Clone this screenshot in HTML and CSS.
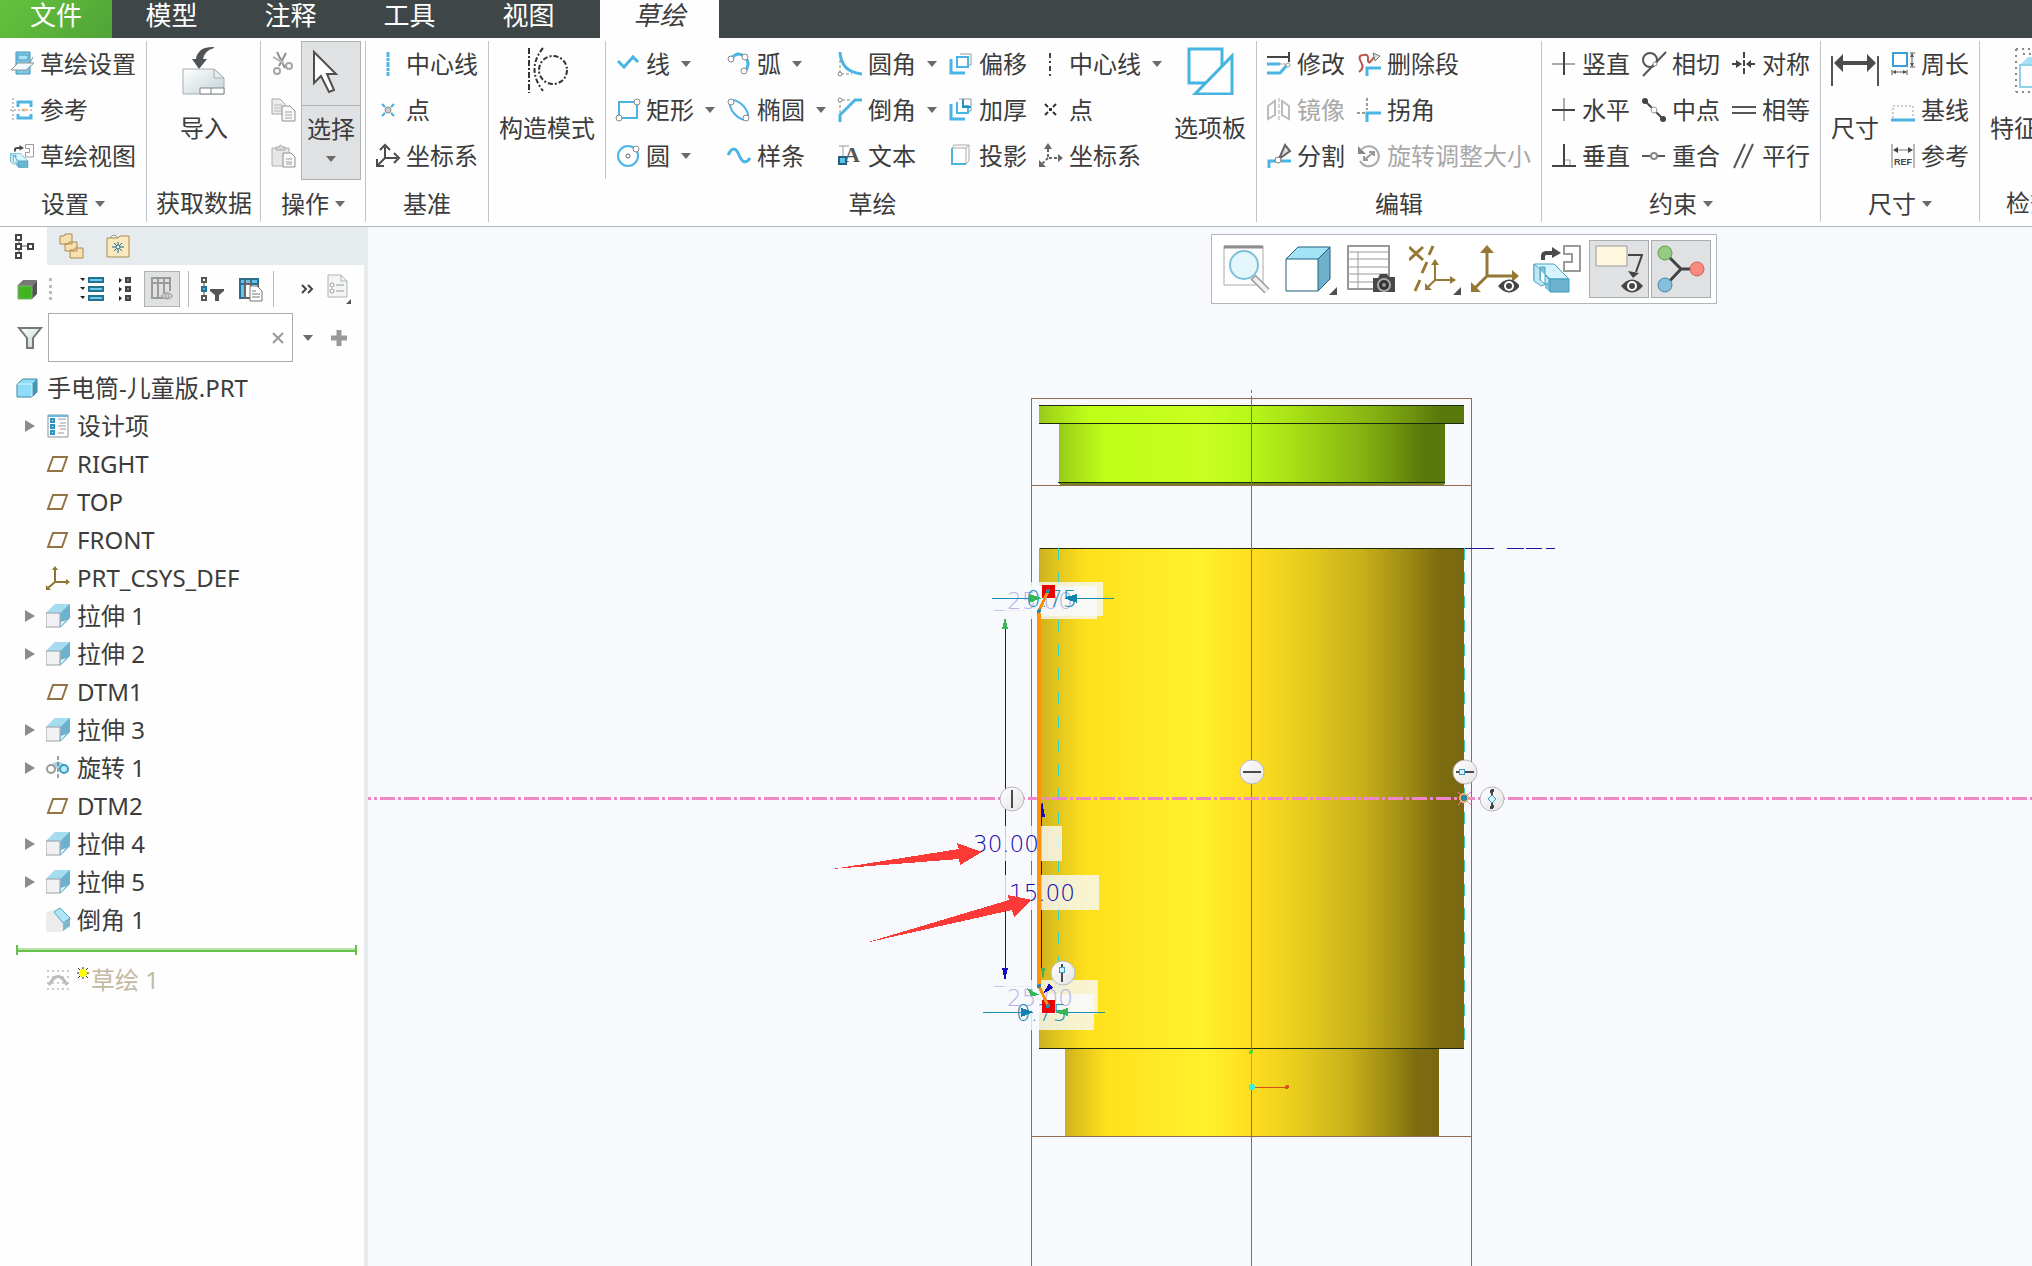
FILE: index.html
```html
<!DOCTYPE html>
<html lang="zh-CN">
<head>
    <meta charset="UTF-8">
    <meta name="viewport" content="width=device-width, initial-scale=1.0">
    <title>手电筒-儿童版.PRT</title>
    <link rel="stylesheet" href="styles.css">
</head>
<body>
    <!-- Shared icons -->
    <svg class="defs" width="0" height="0" aria-hidden="true">
        <defs>
            <linearGradient id="steel" x1="0" y1="0" x2="1" y2="1">
                <stop offset="0" stop-color="#fff"/>
                <stop offset="1" stop-color="#c3d3d8"/>
            </linearGradient>
            <linearGradient id="sky" x1="0" y1="0" x2="1" y2="0">
                <stop offset="0" stop-color="#d5f0fa"/>
                <stop offset="1" stop-color="#5fa9c8"/>
            </linearGradient>
        </defs>
        <symbol id="plane" viewBox="0 0 24 24">
            <path d="M7 5H21L16 19H2Z" fill="#fff" stroke="#927544" stroke-width="2"/>
        </symbol>
        <symbol id="extrude" viewBox="0 0 24 24">
            <path d="M0 9L9 0H24V13L14 24V9Z" fill="url(#sky)"/>
            <path d="M0 9L9 0H24L14 9Z" fill="#a5dcef"/>
            <path d="M15 9L24 0V14L15 23Z" fill="#6cb2cf"/>
            <path d="M15 18L20 16L15 22Z" fill="#e8f7fc"/>
            <path d="M0 9H14V23H0Z" fill="#f1f1f3" stroke="#98a0a4"/>
        </symbol>
        <symbol id="orient" viewBox="0 0 48 48">
            <path d="M10 15V11Q10 8 14 8H20" fill="none" stroke="#4a4a4a" stroke-width="4"/>
            <path d="M19 2L28 8L19 13Z" fill="#4a4a4a"/>
            <path d="M31 1H47V26H31V17H39V9H31Z" fill="#fff" stroke="#9a9a9a" stroke-width="2"/>
            <path d="M1 19H22L36 34V47H17L12 43V30L8 26V39L1 34Z" fill="#7fc0da"/>
            <path d="M1 19H21L36 34H17L12 29V22H7V32L1 34Z" fill="#d6f4fd" stroke="#4aa3c4"/>
            <path d="M17 34H36V47H17Z" fill="#6db3cf" stroke="#3c9cc0"/>
            <path d="M1 19V36L8 41L16 38V34L12 30V39L7 35V24Z" fill="#bfe7f4" stroke="#4aa3c4"/>
        </symbol>
        <symbol id="eye" viewBox="0 0 22 14">
            <path d="M0 7Q11 -6 22 7Q11 20 0 7Z" fill="#454545"/>
            <circle cx="11" cy="7" r="5" fill="#fff"/>
            <circle cx="11" cy="7" r="3" fill="#454545"/>
        </symbol>
    </svg>

    <nav class="tabs">
        <a href="#" class="tab tab-file">文件</a>
        <a href="#" class="tab">模型</a>
        <a href="#" class="tab">注释</a>
        <a href="#" class="tab">工具</a>
        <a href="#" class="tab">视图</a>
        <a href="#" class="tab tab-active">草绘</a>
    </nav>

    <div class="ribbon">
        <div class="group">
            <div class="group-body">
                <div class="column">
                    <button class="item">
                        <svg class="icon" viewBox="0 0 24 24"><path d="M6 0H20V22H6Z" fill="#7cc8e4" stroke="#3b93b5"/><path d="M8 3H18V8H8Z" fill="#a9e0f3" stroke="#4a9dbc"/><path d="M8 11H24L16 18H1Z" fill="#f4fafc" stroke="#8c9599"/><path d="M20 11L23 5" stroke="#8c9599"/></svg>
                        草绘设置
                    </button>
                    <button class="item">
                        <svg class="icon" viewBox="0 0 24 24"><path d="M8 9V4H21V9M8 16V20H21V16" fill="none" stroke="#4db5e6" stroke-width="3"/><path d="M3 0V24M0 12H24" stroke="#8a8a8a" stroke-width="1" stroke-dasharray="2 2"/><path d="M11 12H17M14 10V14" stroke="#e9a864"/></svg>
                        参考
                    </button>
                    <button class="item">
                        <svg class="icon"><use href="#orient"/></svg>
                        草绘视图
                    </button>
                </div>
            </div>
            <div class="group-label">设置<i class="arrow"></i></div>
        </div>

        <div class="group group-data">
            <div class="group-body">
                <button class="large">
                    <svg class="icon-large" viewBox="0 0 48 48"><path d="M34 0Q23 0 20 4Q16 8 16 12H12L19 22L27 12H23Q24 4 34 1Z" fill="#505456"/><path d="M3 22H34L44 31V47H3Z" fill="url(#steel)" stroke="#a4adb0"/><path d="M34 22V31H44Z" fill="#e6edef" stroke="#a4adb0"/><path d="M20 41H44V47H20ZM31 41V47" fill="#fff" stroke="#7c8487"/></svg>
                    导入
                </button>
            </div>
            <div class="group-label">获取数据</div>
        </div>

        <div class="group group-edit">
            <div class="group-body">
                <div class="column column-icons">
                    <button class="item" disabled aria-label="剪切">
                        <svg class="icon" viewBox="0 0 24 24"><path d="M6 0L14 16M15 1L8 14" stroke="#8f8f8f" stroke-width="2"/><path d="M2 5L13 11" stroke="#bdbdbd" stroke-width="2"/><circle cx="6" cy="19" r="3" fill="none" stroke="#a6a6a6" stroke-width="2"/><circle cx="18" cy="14" r="3" fill="none" stroke="#a6a6a6" stroke-width="2"/></svg>
                    </button>
                    <button class="item" disabled aria-label="复制">
                        <svg class="icon" viewBox="0 0 24 24"><path d="M1 1H9L14 6V16H1Z" fill="#ececec" stroke="#a8a8a8"/><path d="M3 7H11M3 10H11M3 13H11" stroke="#b8b8b8"/><path d="M11 8H19L24 13V23H11Z" fill="#f8f8f8" stroke="#909090"/><path d="M14 14H21M14 17H21M14 20H21" stroke="#a0a0a0"/></svg>
                    </button>
                    <button class="item" disabled aria-label="粘贴">
                        <svg class="icon" viewBox="0 0 24 24"><path d="M1 4H18V22H1Z" fill="#e6e6e6" stroke="#b0b0b0"/><path d="M5 6V3H8Q9 -1 12 3H14V6Z" fill="#d8d8d8" stroke="#a8a8a8"/><path d="M12 9H20L24 13V23H12Z" fill="#f8f8f8" stroke="#909090"/><path d="M15 15H21M15 18H21M15 20H21" stroke="#a0a0a0"/></svg>
                    </button>
                </div>
                <div class="select-tool">
                    <button class="select-icon" aria-label="选择工具">
                        <svg class="icon-large" viewBox="0 0 48 48"><path d="M7 3V34L14 27L22 43L27 41L20 25H29Z" fill="#fff" stroke="#505050" stroke-width="2"/></svg>
                    </button>
                    <button class="select-text">选择<i class="arrow"></i></button>
                </div>
            </div>
            <div class="group-label">操作<i class="arrow"></i></div>
        </div>

        <div class="group">
            <div class="group-body">
                <div class="column">
                    <button class="item">
                        <svg class="icon" viewBox="0 0 24 24"><path d="M12 0V24" stroke="#4db5e6" stroke-width="3" stroke-dasharray="5 1 3 1"/></svg>
                        中心线
                    </button>
                    <button class="item">
                        <svg class="icon" viewBox="0 0 24 24"><path d="M6 6L9 9M15 15L18 18M18 6L15 9M9 15L6 18" stroke="#3dafe0" stroke-width="2"/><circle cx="12" cy="12" r="3" fill="#ccc" stroke="#888"/></svg>
                        点
                    </button>
                    <button class="item">
                        <svg class="icon" viewBox="0 0 24 24"><path d="M9 3V14H21M9 14L2 21" fill="none" stroke="#4c4c4c" stroke-width="2"/><path d="M4 6L9 1L14 6M18 9L23 14L18 19M1 15V22H8" fill="none" stroke="#4c4c4c" stroke-width="2"/></svg>
                        坐标系
                    </button>
                </div>
            </div>
            <div class="group-label">基准</div>
        </div>

        <div class="group">
            <div class="group-body">
                <button class="large">
                    <svg class="icon-large" viewBox="0 0 48 48"><path d="M6 1V46" stroke="#333" stroke-width="2" stroke-dasharray="6 2 2 2"/><path d="M20 1Q3 22 20 44" fill="none" stroke="#333" stroke-width="2" stroke-dasharray="5 2 2 2"/><circle cx="30" cy="23" r="14" fill="none" stroke="#333" stroke-width="2" stroke-dasharray="5 2 2 2"/></svg>
                    构造模式
                </button>
                <div class="rule"></div>
                <div class="column">
                    <button class="item">
                        <svg class="icon" viewBox="0 0 24 24"><path d="M2 9L8 15L17 5L22 10" fill="none" stroke="#4ab4e4" stroke-width="3"/></svg>
                        线<i class="arrow"></i>
                    </button>
                    <button class="item">
                        <svg class="icon" viewBox="0 0 24 24"><path d="M3 4H21V20H3Z" fill="none" stroke="#4ab4e4" stroke-width="2"/><circle cx="21" cy="4" r="3" fill="#fff" stroke="#888"/><circle cx="3" cy="20" r="3" fill="#fff" stroke="#888"/></svg>
                        矩形<i class="arrow"></i>
                    </button>
                    <button class="item">
                        <svg class="icon" viewBox="0 0 24 24"><circle cx="12" cy="12" r="10" fill="none" stroke="#4ab4e4" stroke-width="2"/><circle cx="12" cy="12" r="2" fill="#fff" stroke="#666"/><circle cx="20" cy="5" r="3" fill="#fff" stroke="#888"/></svg>
                        圆<i class="arrow"></i>
                    </button>
                </div>
                <div class="column">
                    <button class="item">
                        <svg class="icon" viewBox="0 0 24 24"><path d="M4 7Q11 -2 18 5Q24 11 18 20" fill="none" stroke="#4ab4e4" stroke-width="3"/><circle cx="4" cy="7" r="3" fill="#fff" stroke="#888"/><circle cx="18" cy="5" r="3" fill="#fff" stroke="#888"/><circle cx="17" cy="19" r="3" fill="#fff" stroke="#888"/></svg>
                        弧<i class="arrow"></i>
                    </button>
                    <button class="item">
                        <svg class="icon" viewBox="0 0 24 24"><ellipse cx="12" cy="12" rx="12" ry="6" transform="rotate(48 12 12)" fill="none" stroke="#4ab4e4" stroke-width="2"/><circle cx="4" cy="4" r="3" fill="#fff" stroke="#888"/><circle cx="19" cy="20" r="3" fill="#fff" stroke="#888"/></svg>
                        椭圆<i class="arrow"></i>
                    </button>
                    <button class="item">
                        <svg class="icon" viewBox="0 0 24 24"><path d="M1 11Q7 -1 12 11Q17 23 23 14" fill="none" stroke="#4ab4e4" stroke-width="3"/></svg>
                        样条
                    </button>
                </div>
                <div class="column">
                    <button class="item">
                        <svg class="icon" viewBox="0 0 24 24"><path d="M2 0Q3 20 24 22" fill="none" stroke="#4ab4e4" stroke-width="3"/><path d="M2 8V22H14" fill="none" stroke="#888" stroke-dasharray="3 2"/><circle cx="2" cy="22" r="2" fill="#fff" stroke="#888"/></svg>
                        圆角<i class="arrow"></i>
                    </button>
                    <button class="item">
                        <svg class="icon" viewBox="0 0 24 24"><path d="M2 24V17L17 2H24" fill="none" stroke="#4ab4e4" stroke-width="3"/><path d="M2 15V2H14" fill="none" stroke="#888" stroke-dasharray="3 2"/><circle cx="2" cy="2" r="2" fill="#fff" stroke="#888"/></svg>
                        倒角<i class="arrow"></i>
                    </button>
                    <button class="item">
                        <svg class="icon" viewBox="0 0 24 24"><path d="M1 2H11M5 2V16" stroke="#999" stroke-width="1"/><text class="icon-serif" x="6" y="18">A</text><path d="M1 13H8V20H1Z" fill="#5fc3ee" stroke="#2a5f7c" stroke-width="2"/></svg>
                        文本
                    </button>
                </div>
                <div class="column">
                    <button class="item">
                        <svg class="icon" viewBox="0 0 24 24"><path d="M2 7V21H16" fill="none" stroke="#4ab4e4" stroke-width="3"/><path d="M11 2H22V13H19" fill="none" stroke="#999"/><path d="M8 5H19V15H8Z" fill="#fff" stroke="#4ab4e4" stroke-width="2"/></svg>
                        偏移
                    </button>
                    <button class="item">
                        <svg class="icon" viewBox="0 0 24 24"><path d="M2 6V21H16" fill="none" stroke="#4ab4e4" stroke-width="3"/><path d="M10 1H22V13H19" fill="none" stroke="#999"/><path d="M8 4V15H19V8H14V3" fill="#fff" stroke="#4ab4e4" stroke-width="2"/><path d="M14 1V9H22" fill="none" stroke="#2a8fbd" stroke-width="2"/></svg>
                        加厚
                    </button>
                    <button class="item">
                        <svg class="icon" viewBox="0 0 24 24"><path d="M5 1H20V17" fill="none" stroke="#aaa"/><path d="M5 1L3 5M20 1L17 4M20 17L17 20" stroke="#aaa"/><path d="M3 4H17V20H3Z" fill="#fff" stroke="#aaa"/><path d="M3 4V20H17" fill="none" stroke="#4ab4e4" stroke-width="2"/></svg>
                        投影
                    </button>
                </div>
                <div class="column">
                    <button class="item">
                        <svg class="icon" viewBox="0 0 24 24"><path d="M11 1V24" stroke="#444" stroke-width="2" stroke-dasharray="5 3 2 3"/></svg>
                        中心线<i class="arrow"></i>
                    </button>
                    <button class="item">
                        <svg class="icon" viewBox="0 0 24 24"><path d="M6 6L9 9M14 14L17 17M17 6L14 9M9 14L6 17" stroke="#333" stroke-width="2"/><path d="M10 10H13V13H10Z" fill="#333"/></svg>
                        点
                    </button>
                    <button class="item">
                        <svg class="icon" viewBox="0 0 24 24"><path d="M9 5V14H20M9 14L3 20" fill="none" stroke="#666" stroke-width="2" stroke-dasharray="3 2"/><path d="M9 -1L13 5H5ZM24 14L19 10V18ZM0 23V16L7 23Z" fill="#666"/></svg>
                        坐标系
                    </button>
                </div>
                <button class="large">
                    <svg class="icon-large" viewBox="0 0 48 48"><path d="M3 2H36V36H3Z" fill="none" stroke="#45b4e0" stroke-width="3"/><path d="M46 9V47H9Z" fill="#fff" stroke="#45b4e0" stroke-width="3"/></svg>
                    选项板
                </button>
            </div>
            <div class="group-label">草绘</div>
        </div>

        <div class="group">
            <div class="group-body">
                <div class="column">
                    <button class="item">
                        <svg class="icon" viewBox="0 0 24 24"><path d="M0 5H22M22 0V10" stroke="#444" stroke-width="2"/><path d="M0 12H13M0 21H13L21 12" fill="none" stroke="#4ab4e4" stroke-width="3"/><path d="M13 12H20" stroke="#888" stroke-dasharray="2 1"/><circle cx="21" cy="13" r="2" fill="#fff" stroke="#999"/></svg>
                        修改
                    </button>
                    <button class="item" disabled>
                        <svg class="icon" viewBox="0 0 24 24"><path d="M1 8L8 3V17L1 21ZM22 8L15 3V17L22 21Z" fill="none" stroke="#bbb" stroke-width="2"/><path d="M12 0V24" stroke="#aaa" stroke-dasharray="4 2"/></svg>
                        镜像
                    </button>
                    <button class="item">
                        <svg class="icon" viewBox="0 0 24 24"><path d="M2 24V17H9M14 17H24" fill="none" stroke="#4ab4e4" stroke-width="3"/><path d="M12 15L18 1L23 7Z" fill="#ddd" stroke="#666" stroke-width="2"/><circle cx="11" cy="16" r="3" fill="#fff" stroke="#777"/></svg>
                        分割
                    </button>
                </div>
                <div class="column">
                    <button class="item">
                        <svg class="icon" viewBox="0 0 24 24"><path d="M2 20Q8 16 4 10Q0 3 7 3Q12 2 11 8Q11 14 17 5" fill="none" stroke="#b8534c" stroke-width="2"/><path d="M16 1L23 4L18 9Z" fill="#ddd" stroke="#777"/><path d="M10 24V16H24" fill="none" stroke="#4ab4e4" stroke-width="3"/></svg>
                        删除段
                    </button>
                    <button class="item">
                        <svg class="icon" viewBox="0 0 24 24"><path d="M10 0V12M0 15H8" stroke="#999" stroke-width="2" stroke-dasharray="3 2"/><path d="M10 24V15H24" fill="none" stroke="#4ab4e4" stroke-width="3"/></svg>
                        拐角
                    </button>
                    <button class="item" disabled>
                        <svg class="icon" viewBox="0 0 24 24"><path d="M5 5A10 10 0 1 1 3 17" fill="none" stroke="#aaa" stroke-width="2"/><path d="M1 2V10H9Z" fill="#888"/><path d="M7 16L17 8M12 8H17V12M7 12V16H11" fill="none" stroke="#999" stroke-width="2"/></svg>
                        旋转调整大小
                    </button>
                </div>
            </div>
            <div class="group-label">编辑</div>
        </div>

        <div class="group">
            <div class="group-body">
                <div class="column">
                    <button class="item">
                        <svg class="icon" viewBox="0 0 24 24"><path d="M0 12H23" stroke="#aaa" stroke-width="2"/><path d="M12 0V23" stroke="#444" stroke-width="2"/></svg>
                        竖直
                    </button>
                    <button class="item">
                        <svg class="icon" viewBox="0 0 24 24"><path d="M12 0V23" stroke="#aaa" stroke-width="2"/><path d="M0 12H23" stroke="#444" stroke-width="2"/></svg>
                        水平
                    </button>
                    <button class="item">
                        <svg class="icon" viewBox="0 0 24 24"><path d="M12 16H18V22" fill="none" stroke="#999"/><path d="M12 0V22M0 22H24" stroke="#444" stroke-width="2"/></svg>
                        垂直
                    </button>
                </div>
                <div class="column">
                    <button class="item">
                        <svg class="icon" viewBox="0 0 24 24"><circle cx="8" cy="8" r="7" fill="none" stroke="#555" stroke-width="2"/><path d="M1 24L24 0" stroke="#555" stroke-width="2"/><circle cx="13" cy="12" r="2" fill="#fff" stroke="#999"/></svg>
                        相切
                    </button>
                    <button class="item">
                        <svg class="icon" viewBox="0 0 24 24"><path d="M3 3L21 21" stroke="#444" stroke-width="2"/><circle cx="3" cy="3" r="3" fill="#444"/><circle cx="21" cy="21" r="3" fill="#444"/><circle cx="12" cy="12" r="3" fill="#fff" stroke="#999"/></svg>
                        中点
                    </button>
                    <button class="item">
                        <svg class="icon" viewBox="0 0 24 24"><path d="M0 12H8M15 12H23" stroke="#555" stroke-width="2"/><circle cx="12" cy="12" r="3" fill="#fff" stroke="#888" stroke-width="2"/></svg>
                        重合
                    </button>
                </div>
                <div class="column">
                    <button class="item">
                        <svg class="icon" viewBox="0 0 24 24"><path d="M12 0V24" stroke="#444" stroke-width="2" stroke-dasharray="6 2"/><path d="M0 12H5M18 12H23" stroke="#444" stroke-width="2"/><path d="M10 12L4 8V16ZM14 12L19 8V16Z" fill="#444"/></svg>
                        对称
                    </button>
                    <button class="item">
                        <svg class="icon" viewBox="0 0 24 24"><path d="M0 9H24M0 15H24" stroke="#555" stroke-width="2"/></svg>
                        相等
                    </button>
                    <button class="item">
                        <svg class="icon" viewBox="0 0 24 24"><path d="M2 24L13 0M10 24L21 0" stroke="#555" stroke-width="2"/></svg>
                        平行
                    </button>
                </div>
            </div>
            <div class="group-label">约束<i class="arrow"></i></div>
        </div>

        <div class="group">
            <div class="group-body">
                <button class="large">
                    <svg class="icon-large" viewBox="0 0 48 48"><path d="M1 9V39M47 9V39" stroke="#555" stroke-width="2"/><path d="M10 16H38" stroke="#4c4c4c" stroke-width="4"/><path d="M3 16L12 7V25ZM45 16L36 7V25Z" fill="#4c4c4c"/></svg>
                    尺寸
                </button>
                <div class="column">
                    <button class="item">
                        <svg class="icon" viewBox="0 0 24 24"><path d="M2 1H16V14H2Z" fill="#fff" stroke="#3a9fd8" stroke-width="2"/><path d="M21 2V14M19 1H24M19 15H24M3 20H15M1 18V23M16 18V23" stroke="#555"/><path d="M21 1L23 5H19ZM21 15L19 11H23ZM1 20L5 18V22ZM16 20L12 18V22Z" fill="#555"/></svg>
                        周长
                    </button>
                    <button class="item">
                        <svg class="icon" viewBox="0 0 24 24"><path d="M2 20V8H22V20" fill="none" stroke="#999" stroke-width="1" stroke-dasharray="2 2"/><path d="M0 22H24" stroke="#4ab4e4" stroke-width="3"/></svg>
                        基线
                    </button>
                    <button class="item">
                        <svg class="icon" viewBox="0 0 24 24"><path d="M1 0V24M23 0V24M4 6H20" stroke="#777"/><path d="M2 6L7 3V9ZM22 6L17 3V9Z" fill="#444"/><text class="icon-ref" x="12" y="21">REF</text></svg>
                        参考
                    </button>
                </div>
            </div>
            <div class="group-label">尺寸<i class="arrow"></i></div>
        </div>

        <div class="group">
            <div class="group-body">
                <button class="large">
                    <svg class="icon-large" viewBox="0 0 48 48"><path d="M2 2H46M2 45H46M2 2V45M9 7H46" fill="none" stroke="#888" stroke-width="2" stroke-dasharray="2 4"/><path d="M6 18L14 10H40L34 18Z" fill="#a5e0f5"/><path d="M6 18H34V40H6Z" fill="#fff" stroke="#8fd0ea" stroke-width="2"/></svg>
                    特征要求
                </button>
            </div>
            <div class="group-label">检查<i class="arrow"></i></div>
        </div>
    </div>

    <div class="workspace">
        <aside class="panel">
            <div class="panel-tabs">
                <button class="panel-tab panel-tab-active" aria-label="模型树">
                    <svg class="icon" viewBox="0 0 24 24"><path d="M7 5V20M10 12H19" stroke="#555"/><path d="M4 1H9V6H4ZM4 10H9V15H4ZM4 19H9V24H4ZM16 10H21V15H16Z" fill="#fff" stroke="#444" stroke-width="2"/></svg>
                </button>
                <button class="panel-tab" aria-label="文件夹浏览器">
                    <svg class="icon" viewBox="0 0 24 24"><path d="M1 2H5L6 0H13V10H1ZM6 10H9L10 8H18V17H6ZM11 16H15L16 14H24V24H11Z" fill="#f7dfae" stroke="#a88a55"/></svg>
                </button>
                <button class="panel-tab" aria-label="收藏夹">
                    <svg class="icon" viewBox="0 0 24 24"><path d="M4 4Q8 -2 12 4" fill="#eee" stroke="#999"/><path d="M1 4H12L14 2H23V23H1Z" fill="#fbe8be" stroke="#a88a55"/><path d="M12 8V19M6 13H18M8 9L16 17M16 9L8 17" stroke="#1d6f96" stroke-width="1"/><circle cx="12" cy="13" r="2" fill="#fff" stroke="#1d6f96"/></svg>
                </button>
            </div>
            <div class="tree-tools">
                <button class="tool" aria-label="显示模型">
                    <svg class="icon" viewBox="0 0 24 24"><path d="M0 9L6 3H20L15 9Z" fill="#777"/><path d="M15 9L20 3V17L15 22Z" fill="#555"/><path d="M1 9H15V22H1Z" fill="#44b321" stroke="#79b566"/></svg>
                </button>
                <span class="grip"></span>
                <button class="tool tool-first" aria-label="全部展开">
                    <svg class="icon" viewBox="0 0 24 24"><path d="M9 1H23V5H9ZM9 10H23V14H9ZM9 19H23V23H9Z" fill="#6ccbf2" stroke="#25718f" stroke-width="2"/><path d="M0 1H5L3 4ZM0 10H5L3 13ZM0 19H5L3 22Z" fill="#222"/></svg>
                </button>
                <button class="tool" aria-label="全部折叠">
                    <svg class="icon" viewBox="0 0 24 24"><path d="M14 1H18V5H14ZM14 10H18V14H14ZM14 19H18V23H14Z" fill="#888" stroke="#444" stroke-width="2"/><path d="M7 1V6L10 3ZM7 10V15L10 12ZM7 19V24L10 21Z" fill="#222"/></svg>
                </button>
                <button class="tool tool-on" aria-label="树列">
                    <svg class="icon" viewBox="0 0 24 24"><path d="M2 1H20V6H2ZM2 6H8V21H2ZM8 6H14V21H8ZM20 6V14M14 1V6M8 1V6" fill="none" stroke="#9a9a9a" stroke-width="2"/><path d="M11 19Q17 12 23 19Q17 25 11 19Z" fill="#d5d5d5" stroke="#999"/><circle cx="17" cy="19" r="2" fill="none" stroke="#999"/></svg>
                </button>
                <span class="divider"></span>
                <button class="tool tool-wide" aria-label="树过滤器">
                    <svg class="icon" viewBox="0 0 24 24"><path d="M4 4V20" stroke="#444"/><path d="M2 1H6V5H2ZM2 19H6V23H2Z" fill="#fff" stroke="#555" stroke-width="2"/><path d="M2 10H6V14H2Z" fill="#4ab4e4" stroke="#25718f" stroke-width="2"/><path d="M10 12H24V14L19 18V24H15V18L10 14Z" fill="#555"/></svg>
                </button>
                <button class="tool tool-wide" aria-label="列设置">
                    <svg class="icon" viewBox="0 0 24 24"><path d="M2 2H20V7H2ZM2 7H7V21H2Z" fill="#62c4ee" stroke="#276f8e" stroke-width="2"/><path d="M7 7H13V21H7ZM13 2V7M7 2V7M20 7V12" fill="none" stroke="#666" stroke-width="2"/><path d="M12 9H19L24 14V24H12Z" fill="#fff" stroke="#777"/><path d="M14 14H18M14 17H22M14 20H22" stroke="#777"/></svg>
                </button>
                <span class="divider"></span>
                <button class="tool tool-more" aria-label="更多">
                    <svg class="icon" viewBox="0 0 24 24"><path d="M7 8L11 12L7 16M13 8L17 12L13 16" fill="none" stroke="#444" stroke-width="2"/></svg>
                </button>
                <button class="tool" aria-label="树设置">
                    <svg class="icon-corner" viewBox="0 0 24 30"><path d="M1 1H14L20 7V23H1Z" fill="#f4f6f6" stroke="#aeb4b6"/><path d="M14 1V7H20" fill="none" stroke="#aeb4b6"/><circle cx="5" cy="11" r="2" fill="#fff" stroke="#999"/><circle cx="5" cy="17" r="2" fill="#fff" stroke="#999"/><path d="M9 11H17M9 17H17" stroke="#999"/><path d="M24 25V30H19Z" fill="#555"/></svg>
                </button>
            </div>
            <div class="search">
                <svg class="icon" viewBox="0 0 24 24"><path d="M1 2H23L15 12V22H9V12Z" fill="url(#steel)" stroke="#777" stroke-width="2"/></svg>
                <div class="search-field">
                    <input type="text" class="search-input" aria-label="搜索模型树">
                    <button class="search-clear" aria-label="清除">
                        <svg class="icon-small" viewBox="0 0 14 14"><path d="M2 2L12 12M12 2L2 12" stroke="#999" stroke-width="2"/></svg>
                    </button>
                </div>
                <button class="search-more" aria-label="搜索选项"><i class="arrow"></i></button>
                <button class="search-add" aria-label="添加">
                    <svg class="icon" viewBox="0 0 24 24"><path d="M12 4V20M4 12H20" stroke="#999" stroke-width="5"/></svg>
                </button>
            </div>
            <ul class="tree">
                <li class="node node-root"><svg class="icon" viewBox="0 0 24 24"><path d="M1 8L7 3H21V16L16 21H1Z" fill="#8fdcf6" stroke="#3f87a3"/><path d="M16 8L21 3V16L16 21Z" fill="#4596b6"/><path d="M1 8H16V21" fill="none" stroke="#d9f4fd"/></svg>手电筒-儿童版.PRT</li>
                <li class="node expandable"><svg class="icon" viewBox="0 0 24 24"><path d="M2 1H22V23H2Z" fill="#fff" stroke="#8a9498"/><path d="M2 2H22" stroke="#6bb8d8" stroke-width="2"/><path d="M5 5H8V8H5ZM5 11H8V14H5ZM5 17H8V20H5Z" fill="#d8f2fc" stroke="#2d93c0" stroke-width="2"/><path d="M12 5H20M14 9H20M12 12H20M14 15H20M12 19H18" stroke="#999"/></svg>设计项</li>
                <li class="node"><svg class="icon"><use href="#plane"/></svg>RIGHT</li>
                <li class="node"><svg class="icon"><use href="#plane"/></svg>TOP</li>
                <li class="node"><svg class="icon"><use href="#plane"/></svg>FRONT</li>
                <li class="node"><svg class="icon" viewBox="0 0 24 24"><path d="M9 2V16H22M9 16L2 22" fill="none" stroke="#8f7434" stroke-width="2"/><path d="M9 0L12 4H6ZM24 16L20 13V19ZM0 24V19L5 24Z" fill="#8f7434"/></svg>PRT_CSYS_DEF</li>
                <li class="node expandable"><svg class="icon"><use href="#extrude"/></svg>拉伸 1</li>
                <li class="node expandable"><svg class="icon"><use href="#extrude"/></svg>拉伸 2</li>
                <li class="node"><svg class="icon"><use href="#plane"/></svg>DTM1</li>
                <li class="node expandable"><svg class="icon"><use href="#extrude"/></svg>拉伸 3</li>
                <li class="node expandable"><svg class="icon" viewBox="0 0 24 24"><path d="M4 10Q12 1 20 10L18 16Q12 8 6 16Z" fill="#a9d6e6"/><circle cx="5" cy="13" r="4" fill="#fff" stroke="#999" stroke-width="2"/><circle cx="18" cy="13" r="4" fill="#bfeafa" stroke="#3a9cc0" stroke-width="2"/><path d="M12 0V24" stroke="#444" stroke-dasharray="4 2"/></svg>旋转 1</li>
                <li class="node"><svg class="icon"><use href="#plane"/></svg>DTM2</li>
                <li class="node expandable"><svg class="icon"><use href="#extrude"/></svg>拉伸 4</li>
                <li class="node expandable"><svg class="icon"><use href="#extrude"/></svg>拉伸 5</li>
                <li class="node"><svg class="icon" viewBox="0 0 24 24"><path d="M0 5L8 1L24 13V18L16 24H0Z" fill="#ececec"/><path d="M17 16L24 10V18L17 23Z" fill="#7fb6cb"/><path d="M8 4L14 0L24 10L17 15Z" fill="#aee6f7" stroke="#4fa6c4"/></svg>倒角 1</li>
                <li class="insert-here"></li>
                <li class="node node-pending"><svg class="icon" viewBox="0 0 24 24"><path d="M1 3H23M1 9H23M1 15H23M1 21H23" stroke="#999" stroke-dasharray="2 3"/><path d="M3 17Q12 0 21 17" fill="none" stroke="#bbb" stroke-width="3"/></svg><svg class="icon-star" viewBox="0 0 12 12"><path d="M6 0V12M0 6H12M1 1L11 11M11 1L1 11" stroke="#333"/><circle cx="6" cy="6" r="4" fill="#ff0"/></svg>草绘 1</li>
            </ul>
        </aside>

        <main class="viewport">
            <svg class="scene" viewBox="368 227 1664 1039" preserveAspectRatio="xMidYMin slice">
                <defs>
                    <linearGradient id="yellow">
                        <stop offset="0" stop-color="#cdb020"/>
                        <stop offset=".03" stop-color="#dcc01e"/>
                        <stop offset=".11" stop-color="#ffe01c"/>
                        <stop offset=".22" stop-color="#ffe824"/>
                        <stop offset=".38" stop-color="#fff12c"/>
                        <stop offset=".49" stop-color="#ffdf20"/>
                        <stop offset=".6" stop-color="#ecd01e"/>
                        <stop offset=".76" stop-color="#c8b01a"/>
                        <stop offset=".87" stop-color="#9c8a14"/>
                        <stop offset=".94" stop-color="#7d6c10"/>
                        <stop offset="1" stop-color="#796810"/>
                    </linearGradient>
                    <linearGradient id="green">
                        <stop offset="0" stop-color="#96c81c"/>
                        <stop offset=".03" stop-color="#a4da18"/>
                        <stop offset=".12" stop-color="#bfff18"/>
                        <stop offset=".38" stop-color="#c8ff20"/>
                        <stop offset=".49" stop-color="#b8f81a"/>
                        <stop offset=".6" stop-color="#a8e016"/>
                        <stop offset=".78" stop-color="#86b412"/>
                        <stop offset=".87" stop-color="#6f960e"/>
                        <stop offset=".94" stop-color="#587a0c"/>
                        <stop offset="1" stop-color="#587a0c"/>
                    </linearGradient>
                    <linearGradient id="badge" x1="0" y1="0" x2="1" y2="1">
                        <stop offset="0" stop-color="#fff"/>
                        <stop offset="1" stop-color="#e4e4e6"/>
                    </linearGradient>
                </defs>

                <!-- Cap -->
                <rect x="1039" y="405" width="425" height="19" fill="url(#green)"/>
                <rect x="1059" y="424" width="386" height="59" fill="url(#green)"/>
                <path d="M1059 483H1445L1442 486H1061Z" fill="#70861c"/>
                <path class="edge" d="M1039 405H1464M1039 423H1464M1058 482H1445"/>

                <!-- Body -->
                <rect x="1065" y="1049" width="374" height="87" fill="url(#yellow)"/>
                <rect x="1039" y="548" width="425" height="500" fill="url(#yellow)"/>
                <path class="edge" d="M1039 548H1464M1039 1048H1464"/>

                <!-- Datum plane outlines -->
                <path class="datum" d="M1031 1266V398H1471V1266M1031 485H1471M1031 1136H1471M1251 390V393M1251 396V1266"/>

                <path class="dim-line" d="M1465 548H1494M1507 548H1524M1526 548H1542M1546 548H1555"/>
                <path class="reference" d="M1039 548V1048M1058 548V1030M1464 548V1048"/>
                <path class="centerline" d="M368 798H2032"/>

                <!-- Dimensions -->
                <path class="dim-line" d="M1005 629V970M1041 815V970"/>
                <path class="extension" d="M994 610H1030M994 986H1030"/>
                <g class="mask">
                    <rect x="970" y="826" width="92" height="35"/>
                    <rect x="1004" y="875" width="95" height="35"/>
                    <rect x="1024" y="582" width="79" height="34"/>
                    <rect x="1004" y="586" width="93" height="33"/>
                    <rect x="1004" y="980" width="94" height="34"/>
                    <rect x="1014" y="994" width="80" height="36"/>
                </g>
                <g class="dim-text">
                    <text class="dim-weak" x="1007" y="609">25.00</text>
                    <text class="dim-ref" x="1026" y="607">0.75</text>
                    <text x="973" y="852">30.00</text>
                    <text x="1009" y="901">15.00</text>
                    <text class="dim-weak" x="1007" y="1006">25.00</text>
                    <text class="dim-ref" x="1016" y="1021">0.75</text>
                </g>
                <path class="dim-ref-line" d="M992 598H1030M1068 598H1114M983 1012H1030M1060 1012H1105"/>
                <path d="M1029 594L1042 598L1029 603ZM1005 617L1008 629H1002ZM1043 980L1041 968H1045ZM1027 988L1040 995L1031 996ZM1068 1008V1016L1054 1012Z" fill="#34b857"/>
                <path d="M1077 594V603L1064 598ZM1021 1008V1017L1034 1012Z" fill="#1283ad"/>
                <path d="M1005 981L1002 968H1008ZM1042 800L1045 817H1040ZM1043 994L1049 983L1053 988Z" fill="#1408c0"/>
                <path d="M1039 613V986" stroke="#ff9408" stroke-width="4"/>
                <path d="M1042 585H1055V598H1042ZM1042 1000H1055V1013H1042Z" fill="#e80404"/>
                <path d="M1048 591L1039 611M1039 986L1048 1006" stroke="#f5910e" stroke-width="3"/>
                <g fill="#2e86a8">
                    <circle cx="1048" cy="591" r="2"/>
                    <circle cx="1039" cy="611" r="2"/>
                    <circle cx="1039" cy="986" r="2"/>
                    <circle cx="1048" cy="1006" r="2"/>
                </g>

                <!-- Origin -->
                <path d="M1251 1087V1052" stroke="#5fe01c" stroke-width="1"/>
                <path d="M1251 1087H1287" stroke="#d8501c" stroke-width="1"/>
                <circle cx="1251" cy="1052" r="2" fill="#48e02c"/>
                <circle cx="1287" cy="1087" r="2" fill="#d8501c"/>
                <circle cx="1252" cy="1087" r="3" fill="#3ff0d8"/>
                <path d="M1458 792L1471 805M1471 792L1458 805" stroke="#f07cc4" stroke-width="1"/>
                <circle cx="1464" cy="798" r="4" fill="#2e86a8" stroke="#f0b070" stroke-width="2"/>

                <!-- Constraint badges -->
                <g class="badges">
                    <circle cx="1012" cy="799" r="12"/>
                    <circle cx="1252" cy="772" r="12"/>
                    <circle cx="1465" cy="772" r="12"/>
                    <circle cx="1492" cy="799" r="12"/>
                    <circle cx="1063" cy="973" r="12"/>
                </g>
                <path d="M1012 790V808M1243 772H1261M1456 772H1474M1492 791V807M1062 964V982" stroke="#4a4a4a" stroke-width="2"/>
                <circle cx="1492" cy="791" r="2" fill="#444"/>
                <circle cx="1492" cy="807" r="2" fill="#444"/>
                <g fill="#d4f2fc" stroke="#3c9cc0">
                    <circle cx="1462" cy="772" r="3"/>
                    <circle cx="1062" cy="970" r="3"/>
                    <path d="M1492 795L1496 799L1492 803L1488 799Z"/>
                </g>

                <!-- Callout arrows -->
                <path d="M832 869L959 849L957 843L982 852L960 865L959 859Z" fill="#fb3a38"/>
                <path d="M865 943L1009 900L1008 895L1032 900L1014 917L1012 910Z" fill="#fb3a38"/>
            </svg>

            <div class="view-tools">
                <button class="view-tool" aria-label="重新调整">
                    <svg class="icon-large" viewBox="0 0 48 48"><path d="M1 1H40V40H1Z" fill="#fdfdfd" stroke="#aaa"/><path d="M1 2H40" stroke="#8f8f8f" stroke-width="3"/><path d="M30 32L44 46" stroke="#999" stroke-width="7"/><path d="M31 33L44 46" stroke="#f0f0f0" stroke-width="4"/><circle cx="21" cy="20" r="14" fill="#e3f6fc" stroke="#7cc0da" stroke-width="2"/></svg>
                </button>
                <button class="view-tool" aria-label="显示样式">
                    <svg class="icon-large" viewBox="0 0 48 48"><path d="M1 14L13 2H45L33 14Z" fill="#a3e3f5"/><path d="M33 14L45 2V34L33 46Z" fill="#6fb1cd"/><path d="M1 14H33V46H1ZM1 14L13 2H45V34L33 46M33 14L45 2" fill="none" stroke="#1f5f7c" stroke-width="1"/></svg>
                    <i class="corner"></i>
                </button>
                <button class="view-tool" aria-label="视图管理器">
                    <svg class="icon-large" viewBox="0 0 48 48"><path d="M1 1H42V44H1Z" fill="#fff" stroke="#999" stroke-width="2"/><path d="M1 7H42M1 14H42M1 22H42M1 29H42M1 37H42M11 7V44" stroke="#999" stroke-width="1"/><path d="M26 33H31L33 29H40L42 32H48V47H26Z" fill="#484848"/><circle cx="37" cy="40" r="6" fill="#333" stroke="#aaa" stroke-width="2"/><circle cx="37" cy="40" r="2" fill="#999"/></svg>
                </button>
                <button class="view-tool" aria-label="基准显示过滤器">
                    <svg class="icon-large" viewBox="0 0 48 48"><path d="M0 2L14 15M14 2L0 15M24 1L20 10M18 17L13 28M11 35L6 46" stroke="#957834" stroke-width="3"/><path d="M26 17V35H44M26 35L18 43" fill="none" stroke="#957834" stroke-width="2"/><path d="M26 14L30 20H22ZM47 35L41 31V39ZM16 45V38L23 45Z" fill="#957834"/></svg>
                    <i class="corner"></i>
                </button>
                <button class="view-tool" aria-label="坐标系显示">
                    <svg class="icon-large" viewBox="0 0 48 48"><path d="M16 4V31H42M16 31L4 43" fill="none" stroke="#957834" stroke-width="3"/><path d="M16 0L23 8H9ZM48 31L41 25V37ZM0 47V37L10 47Z" fill="#957834"/><use href="#eye" x="27" y="34" width="22" height="14"/></svg>
                </button>
                <button class="view-tool" aria-label="草绘视图">
                    <svg class="icon-large"><use href="#orient"/></svg>
                </button>
                <button class="view-tool view-tool-on" aria-label="注释显示">
                    <svg class="icon-large" viewBox="0 0 48 48"><path d="M1 1H32V21H1Z" fill="#fff6e0" stroke="#999" stroke-width="1"/><path d="M33 10H47L41 27" fill="none" stroke="#444" stroke-width="2"/><path d="M33 26L44 28L38 33Z" fill="#444"/><use href="#eye" x="26" y="34" width="22" height="14"/></svg>
                </button>
                <button class="view-tool view-tool-on" aria-label="旋转中心">
                    <svg class="icon-large" viewBox="0 0 48 48"><path d="M8 8L24 24H39M24 24L8 41" fill="none" stroke="#444" stroke-width="3"/><circle cx="8" cy="8" r="7" fill="#93cb82" stroke="#5d9a4d"/><circle cx="40" cy="24" r="7" fill="#fb8b80" stroke="#cf5f55"/><circle cx="8" cy="40" r="7" fill="#86bede" stroke="#4a87a8"/></svg>
                </button>
            </div>
        </main>
    </div>
</body>
</html>
```
FILE: styles.css
```css
* {
    box-sizing: border-box;
}

body {
    margin: 0;
    height: 100vh;
    display: flex;
    flex-direction: column;
    overflow: hidden;
    background-color: #fefefe;
    color: #3c3c3c;
    font-family: "Noto Sans", "Noto Sans CJK SC", sans-serif;
    font-size: 24px;
    line-height: 34px;
}

button {
    margin: 0;
    padding: 0;
    border: none;
    background: none;
    color: inherit;
    font: inherit;
    white-space: nowrap;
    cursor: pointer;
}

button:disabled {
    color: #a8a8a8;
    cursor: default;
}

.defs {
    position: absolute;
}

.icon {
    width: 24px;
    height: 24px;
    flex-shrink: 0;
    overflow: visible;
}

.icon-large {
    width: 48px;
    height: 48px;
    flex-shrink: 0;
}

.icon-small {
    width: 14px;
    height: 14px;
}

.icon-serif {
    font: bold 22px "Liberation Serif", serif;
    fill: #555;
}

.icon-ref {
    font: bold 9px "Liberation Sans", sans-serif;
    fill: #444;
    text-anchor: middle;
}

.arrow {
    display: inline-block;
    border: 5px solid transparent;
    border-top: 6px solid #6a6a6a;
    border-bottom: none;
}

/* Tabs */
.tabs {
    display: flex;
    flex-shrink: 0;
    height: 38px;
    background-color: #3e4647;
    font-size: 26px;
}

.tab {
    width: 119px;
    height: 38px;
    line-height: 30px;
    text-align: center;
    color: #fff;
    text-decoration: none;
}

.tab-file {
    width: 112px;
    background: linear-gradient(135deg, #64c23e, #50a336);
}

.tab-active {
    margin-left: 12px;
    background-color: #fefefe;
    color: #3c3c3c;
    font-style: italic;
}

/* Ribbon */
.ribbon {
    display: flex;
    flex-shrink: 0;
    height: 189px;
    padding: 3px 0 4px;
    border-bottom: 1px solid #aeb8bd;
    overflow: hidden;
}

.group {
    display: flex;
    flex-direction: column;
    flex-shrink: 0;
    padding: 0 10px;
    border-right: 1px solid #c0c4c6;
}

.group-data {
    padding: 0 8px 0 9px;
}

.group-edit {
    padding-right: 4px;
}

.group-body {
    display: flex;
    justify-content: center;
    gap: 12px;
    height: 141px;
}

.group-edit .group-body {
    gap: 6px;
}

.group-label {
    display: flex;
    align-items: center;
    justify-content: center;
    gap: 6px;
    height: 46px;
    padding-top: 6px;
}

.group-edit .group-label {
    margin-left: -6px;
}

.column {
    display: grid;
    grid-template-rows: repeat(3, 46px);
    align-content: start;
}

.item {
    display: flex;
    align-items: center;
    gap: 6px;
}

.item .arrow {
    margin-left: 5px;
}

.rule {
    width: 1px;
    margin: 0 -2px;
    background-color: #c0c4c6;
}

.large {
    display: flex;
    flex-direction: column;
    align-items: center;
    gap: 16px;
    padding-top: 6px;
}

.select-tool {
    display: flex;
    flex-direction: column;
    width: 60px;
    height: 139px;
    border: 1px solid #b0b3b4;
    background-color: #dfe1e2;
}

.select-icon {
    display: flex;
    justify-content: center;
    height: 64px;
    padding-top: 7px;
    border-bottom: 1px solid #b0b3b4;
}

.select-text {
    display: flex;
    flex-direction: column;
    align-items: center;
    gap: 10px;
    padding-top: 6px;
}

/* Model tree panel */
.workspace {
    display: flex;
    flex: 1;
    min-height: 0;
}

.panel {
    flex: 0 0 368px;
    min-width: 0;
    border-right: 4px solid #e6eced;
}

.panel-tabs {
    display: flex;
    height: 38px;
    background-color: #e6eced;
}

.panel-tab {
    display: flex;
    align-items: center;
    justify-content: center;
    width: 47px;
}

.panel-tab-active {
    background-color: #fefefe;
}

.tree-tools {
    display: flex;
    align-items: center;
    gap: 8px;
    height: 48px;
    padding: 0 13px 0 17px;
}

.tool {
    display: flex;
    align-items: center;
    justify-content: center;
    height: 36px;
    flex: 0 0 24px;
}

.tool-first {
    margin-left: 20px;
}

.tool-wide {
    flex-basis: 30px;
}

.tool-on {
    flex-basis: 36px;
    border: 1px solid #b0b3b4;
    background-color: #dfe1e2;
}

.tool-more {
    margin-left: auto;
}

.icon-corner {
    width: 24px;
    height: 30px;
}

.grip {
    height: 22px;
    border-left: 3px dotted #bbb;
}

.divider {
    width: 1px;
    height: 36px;
    background-color: #b8bcbe;
}

.search {
    display: flex;
    align-items: center;
    gap: 6px;
    padding: 0 9px 0 18px;
}

.search-field {
    display: flex;
    align-items: center;
    flex: 1;
    min-width: 0;
    height: 49px;
    padding-right: 7px;
    border: 1px solid #a9adaf;
    background-color: #fff;
}

.search-input {
    flex: 1;
    min-width: 0;
    height: 47px;
    padding: 0 8px;
    border: none;
    outline: none;
    background: none;
    font: inherit;
}

.search-clear {
    display: flex;
}

.search-more {
    display: flex;
    padding: 6px 4px;
}

.search-add {
    display: flex;
    padding: 0 4px;
}

.tree {
    margin: 0;
    padding: 7px 0 0;
    list-style: none;
}

.node {
    display: flex;
    align-items: center;
    gap: 7px;
    height: 38px;
    padding-left: 46px;
    white-space: pre;
}

.node-root {
    padding-left: 16px;
}

.expandable {
    padding-left: 25px;
}

.expandable::before {
    content: "";
    margin-right: 4px;
    border: 6px solid transparent;
    border-left: 10px solid #8d8d8d;
    border-right: none;
}

.insert-here {
    height: 10px;
    margin: 6px 7px 6px 16px;
    border: 1px solid #68bf4a;
    border-width: 0 2px;
    background: linear-gradient(#b9e3ab 2px, #68bf4a 2px) center / 100% 4px no-repeat;
}

.node-pending {
    gap: 2px;
    color: #c3b8a2;
}

.icon-star {
    width: 12px;
    height: 12px;
    margin: 0 0 14px 5px;
}

/* Graphics area */
.viewport {
    position: relative;
    flex: 1;
    min-width: 0;
    background-color: #f8f9fc;
}

.scene {
    display: block;
    width: 100%;
    height: 100%;
    shape-rendering: crispEdges;
}

.edge {
    fill: none;
    stroke: #1c2a10;
    stroke-width: 1;
}

.datum {
    fill: none;
    stroke: #8f6c50;
    stroke-width: 1;
}

.reference {
    fill: none;
    stroke: #38d0c0;
    stroke-width: 1;
    stroke-dasharray: 12 12;
}

.centerline {
    stroke: #ee86c8;
    stroke-width: 3;
    stroke-dasharray: 15 3 3 3;
    stroke-dashoffset: 12;
}

.dim-line {
    fill: none;
    stroke: #1c109c;
    stroke-width: 1;
}

.dim-ref-line {
    stroke: #1a8fb4;
    stroke-width: 1;
}

.extension {
    stroke: #c8c4ec;
    stroke-width: 1;
}

.mask {
    fill: #f8f9fc;
    fill-opacity: 0.8;
}

.dim-text {
    font: 200 23px "DejaVu Sans Light", "DejaVu Sans", sans-serif;
    fill: #1408b0;
}

.dim-weak {
    fill: #b9b2e6;
}

.dim-ref {
    fill: #1a8fb4;
}

.badges {
    fill: url(#badge);
    stroke: #b8b8bc;
    stroke-width: 1;
    shape-rendering: auto;
}

.view-tools {
    position: absolute;
    top: 7px;
    right: 315px;
    display: flex;
    gap: 2px;
    padding: 5px;
    border: 1px solid #aeb8bd;
    background-color: #fff;
}

.view-tool {
    position: relative;
    display: flex;
    align-items: center;
    justify-content: center;
    width: 60px;
    height: 58px;
}

.view-tool-on {
    border: 1px solid #a9adaf;
    background-color: #dfe1e2;
}

.corner {
    position: absolute;
    right: 2px;
    bottom: 3px;
    border-left: 8px solid transparent;
    border-bottom: 8px solid #505050;
}
```
